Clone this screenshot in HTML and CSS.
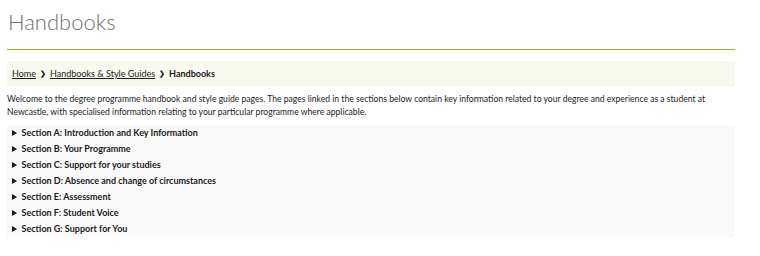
FILE: index.html
```html
<!DOCTYPE html>
<html lang="en">
    <head>
        <title>Handbooks</title>
        <meta charset="utf-8">
        <meta name="viewport" content="width=device-width, initial-scale=1">
        <link rel="stylesheet" href="styles.css">
    </head>
    <body>
        <div class="page">
            <h1 class="title">Handbooks</h1>

            <nav class="breadcrumb">
                <a href="#">Home</a>
                <span class="sep">&#x276F;</span>
                <a href="#">Handbooks &amp; Style Guides</a>
                <span class="sep">&#x276F;</span>
                <strong>Handbooks</strong>
            </nav>

            <p class="intro">Welcome to the degree programme handbook and style guide pages. The pages linked in the sections below contain key information related to your degree and experience as a student at Newcastle, with specialised information relating to your particular programme where applicable.</p>

            <div class="sections">
                <details><summary>Section A: Introduction and Key Information</summary></details>
                <details><summary>Section B: Your Programme</summary></details>
                <details><summary>Section C: Support for your studies</summary></details>
                <details><summary>Section D: Absence and change of circumstances</summary></details>
                <details><summary>Section E: Assessment</summary></details>
                <details><summary>Section F: Student Voice</summary></details>
                <details><summary>Section G: Support for You</summary></details>
            </div>
        </div>
    </body>
</html>
```

FILE: styles.css
```css
html, body {
    margin: 0;
    padding: 0;
    background-color: #fff;
    color: #1b1b1b;
    font-family: Lato, "Open Sans", sans-serif;
}

.page {
    width: 728px;
    padding: 0 0 0 7px;
}

.title {
    margin: 0;
    padding: 8px 0 0 1px;
    height: 50px;
    box-sizing: border-box;
    font-size: 22px;
    font-weight: 300;
    color: #707070;
    border-bottom: 1px solid #9db51c;
}

.breadcrumb {
    margin-top: 11px;
    height: 25px;
    padding: 0 5px;
    display: flex;
    align-items: center;
    gap: 4px;
    background-color: #f7f8ee;
    font-size: 9px;
}

.breadcrumb a {
    color: #1b1b1b;
}

.breadcrumb .sep {
    font-size: 7px;
    font-weight: bold;
    margin: 0;
}

.intro {
    margin: 7px 0 0 0;
    font-size: 8.6px;
    line-height: 13px;
}

.sections {
    margin-top: 6px;
    background-color: #f9f9f9;
}

.sections summary {
    height: 16px;
    line-height: 16px;
    padding-left: 5px;
    font-size: 9px;
    font-weight: bold;
}
```
